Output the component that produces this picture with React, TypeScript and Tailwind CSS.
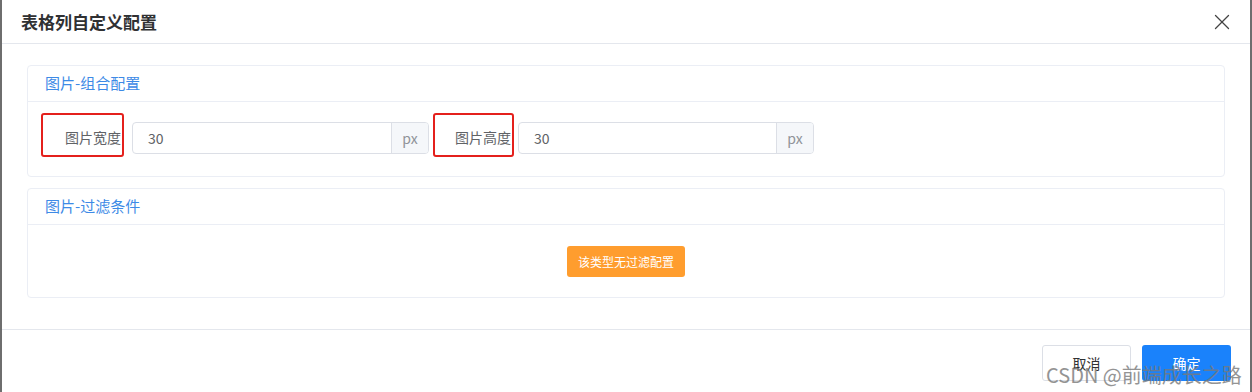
import { X } from "lucide-react";

const font = {
  fontFamily: '"Noto Sans CJK SC", "Noto Sans", "Liberation Sans", sans-serif',
};

const FieldLabel = ({ text, width }: { text: string; width: string }) => {
  return (
    <div
      className={`${width} flex h-[44px] items-center justify-end rounded-[3px] border-2 border-[#e4201c] pt-[5px] pr-[1px] text-[14px] text-[#606266]`}
    >
      {text}
    </div>
  );
};

const UnitInput = ({ value, width }: { value: string; width: string }) => {
  return (
    <div
      className={`${width} mt-[9px] flex h-[32px] overflow-hidden rounded-[4px] border border-[#dcdfe6] text-[14px]`}
    >
      <div className="flex grow items-center pl-[15px] text-[#606266]">{value}</div>
      <div className="flex w-[37px] items-center justify-center border-l border-[#dcdfe6] bg-[#f5f7fa] text-[#909399]">
        px
      </div>
    </div>
  );
};

const Card = ({ title, children }: { title: string; children: React.ReactNode }) => {
  return (
    <div className="rounded-[4px] border border-[#ebeef5] bg-white">
      <div className="flex h-[36px] items-center border-b border-[#ebeef5] pl-[17px] text-[15px] text-[#3d8ae6]">
        {title}
      </div>
      {children}
    </div>
  );
};

export default function App() {
  return (
    <div
      style={font}
      className="relative flex h-[392px] w-[1252px] flex-col overflow-hidden border-x-2 border-[#6e6e6e] bg-white"
    >
      <div className="flex h-[44px] shrink-0 items-center justify-between border-b border-[#e4e7ed] pl-[19px] pr-[15px]">
        <h1 className="text-[17px] font-bold text-[#303133]">表格列自定义配置</h1>
        <X size={26} strokeWidth={1.2} className="text-[#444]" />
      </div>

      <div className="flex flex-col gap-[11px] px-[25px] pt-[21px] pb-[31px]">
        <Card title="图片-组合配置">
          <div className="flex items-start pl-[13px] pt-[11px] pb-[19px]">
            <FieldLabel text="图片宽度" width="w-[83px]" />
            <div className="ml-[8px]">
              <UnitInput value="30" width="w-[297px]" />
            </div>
            <div className="ml-[4px]">
              <FieldLabel text="图片高度" width="w-[81px]" />
            </div>
            <div className="ml-[4px]">
              <UnitInput value="30" width="w-[296px]" />
            </div>
          </div>
        </Card>

        <Card title="图片-过滤条件">
          <div className="flex justify-center pt-[21px] pb-[20px]">
            <div className="flex h-[31px] w-[118px] items-center justify-center rounded-[3px] bg-[#ff9d2e] text-[12px] text-white">
              该类型无过滤配置
            </div>
          </div>
        </Card>
      </div>

      <div className="flex grow justify-end gap-[11px] border-t border-[#e4e7ed] pt-[15px] pr-[19px]">
        <div className="flex h-[36px] w-[89px] items-center justify-center rounded-[3px] border border-[#dcdfe6] text-[14px] text-[#303133]">
          取消
        </div>
        <div className="flex h-[36px] w-[89px] items-center justify-center rounded-[3px] bg-[#1a82fb] text-[14px] text-white">
          确定
        </div>
      </div>

      <div className="pointer-events-none absolute left-[1044px] top-[361px] text-[20px] leading-[28px] text-[#7a7a7a] opacity-80">
        CSDN @前端成长之路
      </div>
    </div>
  );
}
